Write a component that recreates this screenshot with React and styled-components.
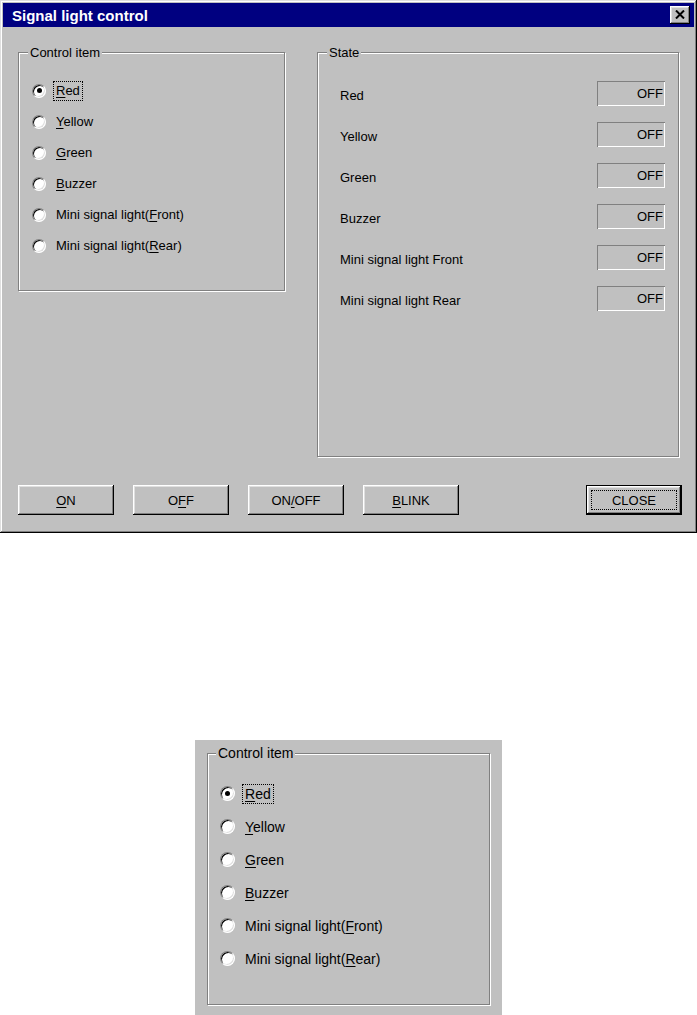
import React from "react";
import styled, { createGlobalStyle, css } from "styled-components";

const controlItems = [
  "&Red",
  "&Yellow",
  "&Green",
  "&Buzzer",
  "Mini signal light(&Front)",
  "Mini signal light(&Rear)",
];

const stateItems = [
  "Red",
  "Yellow",
  "Green",
  "Buzzer",
  "Mini signal light Front",
  "Mini signal light Rear",
];

const actions = ["&ON", "O&FF", "ON&/OFF", "&BLINK"];

// "&" marks the accelerator letter, like a Windows resource string
const AccelText = ({ text }) => {
  const i = text.indexOf("&");
  if (i < 0) return text;
  return (
    <>
      {text.slice(0, i)}
      <Key>{text[i + 1]}</Key>
      {text.slice(i + 2)}
    </>
  );
};

const ControlItemGroup = ({ big }) => (
  <GroupBox $w={big ? 283 : 267} $h={big ? 260 : 246} $big={big}>
    <Legend $big={big}>Control item</Legend>
    <RadioList $pad={big ? "16px 0 0 12px" : "15px 0 0 13px"}>
      {controlItems.map((label, index) => (
        <RadioRow key={index} $big={big}>
          <RadioCircle $checked={index === 0} $big={big} />
          <RadioLabel $focused={index === 0}>
            <AccelText text={label} />
          </RadioLabel>
        </RadioRow>
      ))}
    </RadioList>
  </GroupBox>
);

const App = () => {
  return (
    <>
      <GlobalStyle />
      <Window>
        <TitleBar>
          <TitleText>Signal light control</TitleText>
          <CloseButton aria-label="Close">
            <svg width="10" height="9" viewBox="0 0 10 9">
              <path d="M1 0.5 L9 8.5 M9 0.5 L1 8.5" stroke="#000" strokeWidth="2" />
            </svg>
          </CloseButton>
        </TitleBar>
        <Body>
          <Panels>
            <ControlItemGroup />
            <GroupBox $w={362} $h={412}>
              <Legend>State</Legend>
              <StateList>
                {stateItems.map((name) => (
                  <StateRow key={name}>
                    <StateName>{name}</StateName>
                    <StateValue>OFF</StateValue>
                  </StateRow>
                ))}
              </StateList>
            </GroupBox>
          </Panels>
          <ButtonBar>
            {actions.map((a) => (
              <PushButton key={a}>
                <ButtonFace>
                  <AccelText text={a} />
                </ButtonFace>
              </PushButton>
            ))}
            <PushButton $default>
              <ButtonFace $focus>CLOSE</ButtonFace>
            </PushButton>
          </ButtonBar>
        </Body>
      </Window>
      <Figure>
        <ControlItemGroup big />
      </Figure>
    </>
  );
};

export default App;

const GlobalStyle = createGlobalStyle`
  html, body {
    margin: 0;
    padding: 0;
    background: #ffffff;
  }
  body {
    font-family: "Liberation Sans", Arial, sans-serif;
    font-size: 13px;
    color: #000000;
  }
  * {
    box-sizing: border-box;
  }
`;

const raised = css`
  background: #c0c0c0;
  box-shadow: inset -1px -1px 0 #000000, inset 1px 1px 0 #ffffff,
    inset -2px -2px 0 #808080, inset 2px 2px 0 #dfdfdf;
`;

const Window = styled.div`
  width: 697px;
  height: 533px;
  padding: 3px;
  background: #c0c0c0;
  box-shadow: inset -1px -1px 0 #000000, inset 1px 1px 0 #dfdfdf,
    inset -2px -2px 0 #808080, inset 2px 2px 0 #ffffff;
`;

const TitleBar = styled.div`
  height: 24px;
  display: flex;
  align-items: center;
  justify-content: space-between;
  padding: 0 4px 0 9px;
  background: #000080;
`;

const TitleText = styled.span`
  color: #ffffff;
  font-weight: bold;
  font-size: 15px;
`;

const CloseButton = styled.button`
  ${raised};
  width: 20px;
  height: 18px;
  border: none;
  padding: 0 0 1px 0;
  display: flex;
  align-items: center;
  justify-content: center;
`;

const Body = styled.div`
  padding: 18px 15px 0 15px;
`;

const Panels = styled.div`
  display: flex;
  align-items: flex-start;
  gap: 32px;
`;

const GroupBox = styled.fieldset`
  margin: 0;
  min-width: 0;
  width: ${(p) => p.$w}px;
  height: ${(p) => p.$h}px;
  padding: 0;
  border: 1px solid #808080;
  box-shadow: inset 1px 1px 0 #ffffff, 1px 1px 0 #ffffff;
  font-size: ${(p) => (p.$big ? 14 : 13)}px;
`;

const Legend = styled.legend`
  margin-left: ${(p) => (p.$big ? 8 : 9)}px;
  padding: 0 2px;
  line-height: ${(p) => (p.$big ? 16 : 15)}px;
  background: #c0c0c0;
`;

const RadioList = styled.div`
  display: flex;
  flex-direction: column;
  padding: ${(p) => p.$pad};
`;

const RadioRow = styled.div`
  display: flex;
  align-items: center;
  height: ${(p) => (p.$big ? 33 : 31)}px;
`;

const RadioCircle = styled.span`
  flex: none;
  display: flex;
  align-items: center;
  justify-content: center;
  width: ${(p) => (p.$big ? 15 : 14)}px;
  height: ${(p) => (p.$big ? 15 : 14)}px;
  border-radius: 50%;
  border: 1px solid;
  border-color: #808080 #ffffff #ffffff #808080;
  background: #ffffff;
  box-shadow: inset 1px 1px 0 #000000, inset -1px -1px 0 #dfdfdf;

  &::after {
    content: "";
    display: ${(p) => (p.$checked ? "block" : "none")};
    width: 5px;
    height: 5px;
    border-radius: 50%;
    background: #000000;
  }
`;

const RadioLabel = styled.span`
  margin-left: 7px;
  padding: 1px 2px;
  line-height: 16px;
  border: 1px dotted ${(p) => (p.$focused ? "#000000" : "transparent")};
`;

const Key = styled.span`
  text-decoration: underline;
  text-underline-offset: 2px;
`;

const StateList = styled.div`
  padding: 13px 13px 0 22px;
`;

const StateRow = styled.div`
  display: flex;
  align-items: center;
  justify-content: space-between;
  height: 41px;
`;

const StateName = styled.span`
  padding-top: 3px;
`;

const StateValue = styled.span`
  width: 68px;
  height: 25px;
  line-height: 25px;
  padding-right: 2px;
  text-align: right;
  box-shadow: inset 1px 1px 0 #808080, inset -1px -1px 0 #ffffff;
`;

const ButtonBar = styled.div`
  display: flex;
  gap: 19px;
  margin: 28px -3px 0 0;
`;

const PushButton = styled.button`
  ${raised};
  width: 96px;
  height: 30px;
  padding: 4px;
  border: ${(p) => (p.$default ? "1px solid #000000" : "none")};
  font: 13px "Liberation Sans", Arial, sans-serif;
  color: #000000;
  ${(p) =>
    p.$default &&
    css`
      margin-left: auto;
    `}
`;

const ButtonFace = styled.span`
  display: flex;
  align-items: center;
  justify-content: center;
  width: 100%;
  height: 100%;
  border: 1px dotted ${(p) => (p.$focus ? "#000000" : "transparent")};
`;

const Figure = styled.div`
  width: 307px;
  height: 280px;
  margin: 207px 0 0 195px;
  padding: 5px 0 0 12px;
  background: #c0c0c0;
  overflow: hidden;
`;
